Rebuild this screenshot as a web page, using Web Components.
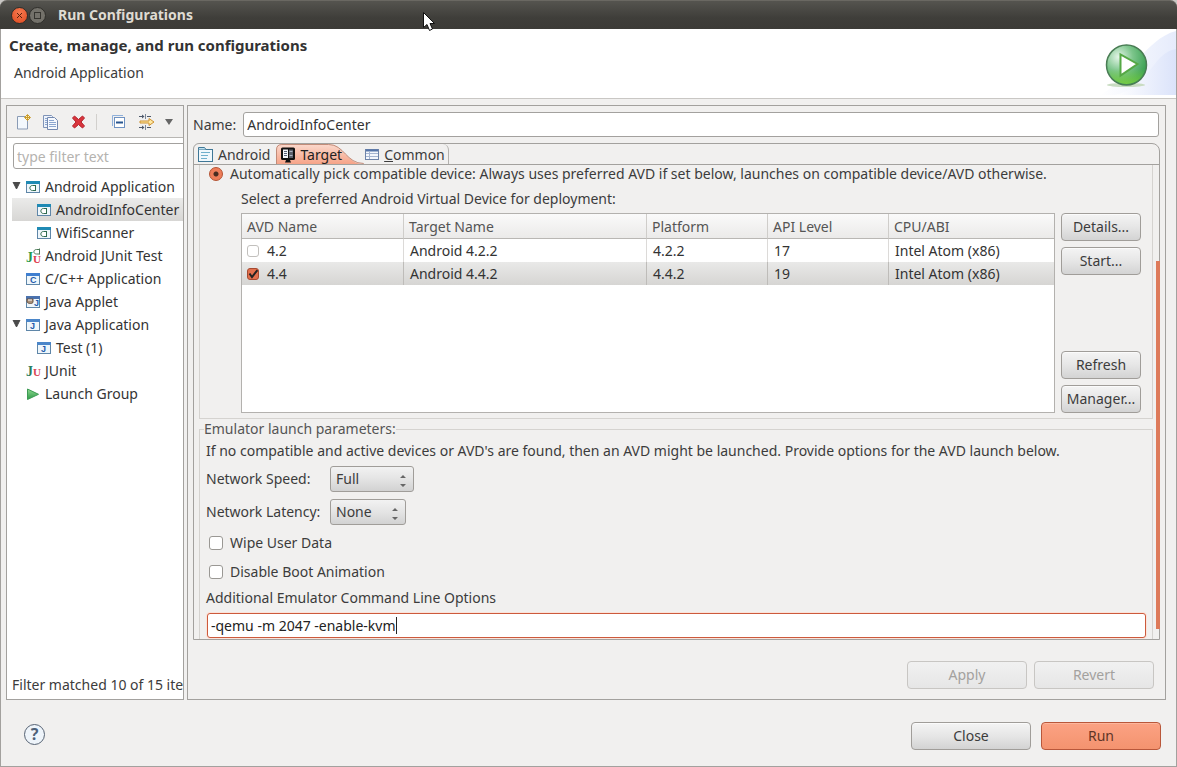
<!DOCTYPE html>
<html lang="en">
<head>
<meta charset="utf-8">
<title>Run Configurations</title>
<style>
  html, body { height: 100%; }
  body {
    margin: 0; overflow: hidden; background: #c9c7c4;
    font: 14px/20px "Noto Sans", "Open Sans", sans-serif; color: #3c3c3c;
  }
</style>
</head>
<body>
<app-window></app-window>
<script>
const define = (name, html, init) => {
  const tpl = document.createElement('template');
  tpl.innerHTML = '<style>*,*::before,*::after{box-sizing:border-box}:host{box-sizing:border-box}</style>' + html;
  customElements.define(name, class extends HTMLElement {
    constructor() {
      super();
      this.attachShadow({ mode: 'open' }).append(tpl.content.cloneNode(true));
    }
    connectedCallback() { if (init) init(this, this.shadowRoot); }
  });
};

/* ---------- icons, 16x16 unless the viewBox says otherwise ---------- */
const frame = (top, inner) => `<rect x="1.5" y="2.5" width="13" height="11" fill="#eef6fb" stroke="#5f86a8"/><rect x="1" y="2" width="14" height="3" fill="${top}"/>${inner}`;
const letter = (t, x, y, c, s = 9) => `<text x="${x}" y="${y}" font-family="Liberation Sans, sans-serif" font-weight="bold" font-size="${s}" fill="${c}">${t}</text>`;
const serif = (t, x, y, c, s) => `<text x="${x}" y="${y}" font-family="Liberation Serif, serif" font-weight="bold" font-size="${s}" fill="${c}">${t}</text>`;
const ICONS = {
  android: frame('#1f8ab4', '<path d="M10.500 6v6M10.500 6.500h-3c-3.500 0-3.500 5 0 5h3" fill="#fff" stroke="#2f6b4f"/>'),
  junitdroid: serif('J', 1, 14, '#2a9a4a', 14) + serif('U', 8, 15, '#dd3b4c', 11) + '<path d="M14.500 .5v6M14.500 1.500h-3c-3.500 0-3.500 4.500 0 4.500h3" fill="none" stroke="#4d7a58"/>',
  c: frame('#3f7fd0', letter('C', 5, 12, '#1f5cab')),
  applet: frame('#4a72ae', letter('J', 9, 12, '#1f5cab')) + '<path d="M2 5h6v3c0 2-5 2-6 0z" fill="#a98f77" stroke="#6a5546"/><path d="M4 5v2M6 5v2" stroke="#fff"/>',
  java: frame('#4b86c9', letter('J', 5, 12, '#1f5cab')),
  junit: serif('J', 1, 13, '#2b7c5c', 14) + serif('U', 8, 13, '#d84655', 11),
  group: '<defs><linearGradient id="lg" x2="0" y2="1"><stop stop-color="#8fd98f"/><stop offset="1" stop-color="#2d9a48"/></linearGradient></defs><path d="M2.5 3v10.5L13.5 8.3z" fill="url(#lg)" stroke="#3d9b54"/>',
  page: '<path d="M1.500 2.500h8l2 4v8.500h-10z" fill="#f3f8fd" stroke="#8a9bb5"/><path d="M11.500 .5l3 3-3 3-3-3z" fill="#fff1b0" stroke="#c99a2b"/><path d="M11.500 1v5M9 3.500h5" stroke="#c99a2b"/>',
  copy: '<path d="M.5 1.500h8l1 1v11h-9z" fill="#eef3fb" stroke="#8094b8"/><path d="M4.500 3.500h7l3 3v9h-10z" fill="#f6f9fe" stroke="#7489b0"/><path d="M6 6.500h5M6 8.500h7M6 10.500h7M6 12.500h7M2 4.500h2M2 6.500h2M2 8.500h2M2 10.500h2" stroke="#8ba6d0"/>',
  del: '<path d="M1.500 4l2-2L7.500 5.500 11.500 2l2 2L10 8l3.500 4-2 2-4-3.500L3.500 14l-2-2L5 8z" fill="#d9343c" stroke="#b3222c"/>',
  collapse: '<path d="M1.500 12V1.500H12" fill="none" stroke="#8fb0da"/><rect x="3.500" y="3.500" width="10" height="10" fill="#fff" stroke="#6f92c2"/><path d="M5 8.500h7" stroke="#28558f" stroke-width="2"/>',
  filter: '<path d="M0 2.500h5M0 13.500h5M8 2.500h4M8 13.500h4" stroke="#4e596b"/><path d="M3 .5l2.500 2L3 4.500zM3 11.500l2.500 2-2.500 2z" fill="#4e596b"/><path d="M6.500 0v5M6.500 11v5" stroke="#7b8798"/><path d="M1 7h9V4.500l5 3.500-5 3.500V9H1z" fill="#ffe9a3" stroke="#cf9231"/>',
  tabAndroid: '<rect x=".5" y="2.500" width="14" height="12" fill="#f0f8fc" stroke="#3f7796"/><path d="M.5 2.500V.5h6l1.500 2H14.500" fill="#bfe0ee" stroke="#3f7796"/><path d="M3 5.500h9M3 8.500h7M3 11.500h6" stroke="#6fb0cc"/>',
  tabTarget: '<rect x="1" y=".5" width="14" height="12.500" rx="1.500" fill="#111"/><rect x="3" y="2.500" width="5" height="8.500" fill="#f3f6fb"/><path d="M4 4.500h3M4 6.500h3M4 8.500h3" stroke="#59657a"/><rect x="9" y="2.500" width="4" height="8.500" fill="#5b616c"/><path d="M9.500 4.500h3M9.500 8.500h3" stroke="#aeb6c4"/><path d="M5 15.500l1-2.500h4l1 2.500z" fill="#111"/>',
  tabCommon: '<rect x="1.500" y="2.500" width="13" height="10" fill="#f4f7fc" stroke="#6c82a8"/><path d="M2 3.500h12" stroke="#5574a8" stroke-width="2"/><path d="M2 6.500h12M2 9.500h12M5.500 4v8" stroke="#a5b5d0"/>'
};
define('ui-icon', `<style>:host{display:block;flex:none;width:16px;height:16px}svg{display:block;width:100%;height:100%}</style><svg viewBox="0 0 16 16" aria-hidden="true"></svg>`,
  (el, r) => { r.querySelector('svg').innerHTML = ICONS[el.getAttribute('name')] || ''; });

/* ---------- controls ---------- */
define('ui-button', `
<style>
  :host { display: block; }
  button {
    display: block; width: 100%; height: 28px; padding: 0; font: inherit; color: #3c3c3c; white-space: nowrap;
    border: 1px solid #a09d99; border-radius: 4px; box-shadow: inset 0 1px #fbfbfb;
    background: linear-gradient(#f4f4f4, #e6e6e6 50%, #d3d3d3);
  }
  :host([primary]) button { border-color: #b9573a; color: #5e3526; background: linear-gradient(#fba283, #f4936f); box-shadow: inset 0 1px #fdb69c; }
  button:disabled { color: #a3a19e; border-color: #c8c6c3; background: linear-gradient(#f1f1f1, #e6e6e6); box-shadow: none; }
</style>
<button type="button"><slot></slot></button>`,
  (el, r) => { r.querySelector('button').disabled = el.hasAttribute('disabled'); });

define('ui-check', `
<style>
  :host { display: block; }
  label { display: flex; align-items: center; gap: 7px; line-height: 20px; white-space: nowrap; }
  :host([radio]) label { line-height: 17px; }
  input { appearance: none; flex: none; width: 14px; height: 14px; margin: 0; border: 1px solid #9a9894; border-radius: 3px; background: #fff; }
  :host([small]) input { width: 12px; height: 12px; border-color: #c2c0bd; }
  :host([small]) label { gap: 8px; }
  :host([small]) input:checked {
    border-color: #a64a31;
    background: url("data:image/svg+xml,%3Csvg xmlns='http://www.w3.org/2000/svg' viewBox='0 0 10 10'%3E%3Cpath d='M1.500 4.500l2.500 3.500 5.500-7' fill='none' stroke='%23222' stroke-width='2'/%3E%3C/svg%3E") #e2704d;
  }
  input[type=radio] { border-radius: 50%; }
  input[type=radio]:checked { border-color: #b4512f; background: radial-gradient(circle, #4a2c20 0 2px, #ee7d59 3px); }
</style>
<label><input type="checkbox"><span><slot></slot></span></label>`,
  (el, r) => {
    const i = r.querySelector('input');
    if (el.hasAttribute('radio')) i.type = 'radio';
    i.checked = el.hasAttribute('checked');
  });

define('ui-select', `
<style>
  :host { display: flex; align-items: center; gap: 6px; }
  label { width: 118px; white-space: nowrap; }
  .box { position: relative; display: block; }
  select {
    appearance: none; display: block; height: 26px; padding: 0 30px 0 5px; font: inherit; color: #3c3c3c;
    border: 1px solid #a09d99; border-radius: 3px; background: linear-gradient(#f2f2f2, #e4e4e4 50%, #d2d2d2);
  }
  :host([wide]) select { width: 84px; } :host(:not([wide])) select { width: 76px; }
  svg { position: absolute; right: 7px; top: 7px; width: 8px; height: 14px; pointer-events: none; }
</style>
<label for="s"></label>
<span class="box"><select id="s"><option></option></select>
<svg viewBox="0 0 8 14" fill="#666"><path d="M1 5l3-3 3 3zM1 11l3 3 3-3z"/></svg></span>`,
  (el, r) => {
    r.querySelector('label').textContent = el.getAttribute('label');
    r.querySelector('option').textContent = el.getAttribute('value');
  });

/* ---------- window chrome ---------- */
define('title-bar', `
<style>
  :host { display: flex; align-items: center; height: 29px; flex: none; padding: 0 11px; gap: 1px; position: relative;
    border-radius: 7px 7px 0 0; background: linear-gradient(#55544f, #3f3e3a 60%, #3c3b37); border-top: 1px solid #6a6862; }
  button { width: 17px; height: 17px; padding: 0; border: 1px solid #2f2e2a; border-radius: 50%; }
  .close { background: radial-gradient(circle at 50% 30%, #f6794f, #dd4a20); }
  .max { background: #73716a; }
  svg { display: block; width: 15px; height: 15px; }
  h1 { margin: 0 0 0 11px; font-size: 14px; line-height: 20px; font-weight: bold; color: #dfdbd2; }
  .pointer { position: absolute; left: 422px; top: 10px; width: 14px; height: 22px; }
</style>
<button class="close" type="button" aria-label="Close"><svg viewBox="0 0 15 15"><path d="M5 5l5 5M10 5l-5 5" stroke="#59200c"/></svg></button>
<button class="max" type="button" aria-label="Maximize"><svg viewBox="0 0 15 15"><rect x="4.500" y="4.500" width="6" height="6" fill="none" stroke="#35342f"/></svg></button>
<h1>Run Configurations</h1>
<svg class="pointer" viewBox="0 0 14 22"><path d="M1.500 1.500v15l3.500-3 2.500 6 3-1.500-2.500-5.500h4.500z" fill="#fff" stroke="#111"/></svg>`);

define('dialog-header', `
<style>
  :host { display: flex; justify-content: space-between; flex: none; height: 70px; background: #fff; border-bottom: 1px solid #c9c7c4; overflow: hidden; }
  .text { padding: 6px 0 0 8px; }
  h2 { margin: 0; font-size: 15px; line-height: 20px; font-weight: bold; color: #333; }
  p { margin: 8px 0 0 5px; }
  svg { display: block; width: 136px; height: 66px; }
</style>
<div class="text"><h2>Create, manage, and run configurations</h2><p>Android Application</p></div>
<svg viewBox="0 0 136 66" aria-hidden="true">
  <defs>
    <radialGradient id="g" cx=".3" cy=".3" r=".8"><stop stop-color="#e4f5e8"/><stop offset=".45" stop-color="#7cc58b"/><stop offset="1" stop-color="#2f9a4a"/></radialGradient>
    <linearGradient id="b" x2="1" y2="0"><stop stop-color="#fff"/><stop offset="1" stop-color="#dbe3fa"/></linearGradient>
    <linearGradient id="y" x2="0" y2="1"><stop offset=".6" stop-color="#8bdc3a" stop-opacity="0"/><stop offset="1" stop-color="#8bdc3a" stop-opacity=".7"/></linearGradient>
  </defs>
  <path d="M60 66C90 50 105 10 136 2V66z" fill="url(#b)" opacity=".7"/>
  <path d="M75 66C110 58 112 24 136 20V66z" fill="url(#b)"/>
  <ellipse cx="86" cy="56" rx="19" ry="2" fill="#c9dcc2"/>
  <circle cx="86.500" cy="36" r="20" fill="url(#g)" stroke="#4a7d55" stroke-width="1.500"/>
  <circle cx="86.500" cy="36" r="19" fill="url(#y)"/>
  <path d="M80.500 25.500v21L97.500 35z" fill="#fff" stroke="#55a845" stroke-width="2"/>
</svg>`);

/* ---------- left panel ---------- */
define('tree-item', `
<style>
  :host { display: flex; align-items: center; height: 23px; white-space: nowrap; padding-left: 13px; color: #333; }
  :host([child]) { padding-left: 24px; }
  :host([open]) { padding-left: 0; }
  :host([selected]) { background: linear-gradient(#ebebea, #d7d6d4); }
  .arrow { display: none; width: 13px; flex: none; }
  :host([open]) .arrow { display: block; }
  .arrow svg { display: block; width: 9px; height: 10px; }
  ui-icon { margin-right: 4px; }
</style>
<span class="arrow"><svg viewBox="0 0 9 10"><path d="M1 0h7L4.500 7z" fill="#4a4a4a" stroke="#4a4a4a"/></svg></span>
<ui-icon></ui-icon><span><slot></slot></span>`,
  (el, r) => {
    el.setAttribute('role', 'treeitem');
    const i = r.querySelector('ui-icon'), n = document.createElement('ui-icon');
    n.setAttribute('name', el.getAttribute('icon')); i.replaceWith(n);
  });

define('side-panel', `
<style>
  :host { display: flex; flex-direction: column; background: #fff; border: 1px solid #a3a19e; overflow: hidden; }
  .tools { display: flex; align-items: center; height: 32px; flex: none; padding: 0 8px 0 9px; background: #f1f0ef; border-bottom: 1px solid #b8b6b3; }
  .tools button { width: 28px; height: 24px; flex: none; padding: 0; border: 0; background: none; display: flex; align-items: center; justify-content: flex-start; }
  .tools .wide { width: 27px; }
  .tools .short { width: 25px; }
  .sep { width: 1px; height: 16px; background: #d2d0cd; margin-right: 14px; flex: none; }
  .tools .menu { width: 10px; margin-left: -2px; }
  .menu svg { width: 8px; height: 6px; }
  .body { flex: 1; display: flex; flex-direction: column; padding: 5px 0 4px 5px; }
  input { width: 220px; height: 26px; flex: none; margin-left: 1px; padding: 0 3px; font: inherit; border: 1px solid #a3a19e; border-radius: 3px; background: #fff; }
  input::placeholder { color: #b5b3b0; opacity: 1; }
  .tree { margin-top: 6px; flex: 1; }
  .count { white-space: nowrap; }
</style>
<div class="tools">
  <button type="button" class="wide" aria-label="New"><ui-icon name="page"></ui-icon></button>
  <button type="button" aria-label="Duplicate"><ui-icon name="copy"></ui-icon></button>
  <button type="button" class="short" aria-label="Delete"><ui-icon name="del"></ui-icon></button>
  <span class="sep"></span>
  <button type="button" aria-label="Collapse all"><ui-icon name="collapse"></ui-icon></button>
  <button type="button" aria-label="Filter"><ui-icon name="filter"></ui-icon></button>
  <button type="button" class="menu" aria-label="Menu"><svg viewBox="0 0 8 6"><path d="M0 0h8L4 6z" fill="#666"/></svg></button>
</div>
<div class="body">
  <input type="text" placeholder="type filter text" aria-label="Filter">
  <div class="tree" role="tree">
    <tree-item open icon="android">Android Application</tree-item>
    <tree-item child selected icon="android">AndroidInfoCenter</tree-item>
    <tree-item child icon="android">WifiScanner</tree-item>
    <tree-item icon="junitdroid">Android JUnit Test</tree-item>
    <tree-item icon="c">C/C++ Application</tree-item>
    <tree-item icon="applet">Java Applet</tree-item>
    <tree-item open icon="java">Java Application</tree-item>
    <tree-item child icon="java">Test (1)</tree-item>
    <tree-item icon="junit">JUnit</tree-item>
    <tree-item icon="group">Launch Group</tree-item>
  </div>
  <div class="count">Filter matched 10 of 15 items</div>
</div>`);

/* ---------- right panel ---------- */
define('tab-strip', `
<style>
  :host { display: flex; height: 21px; flex: none; border-bottom: 1px solid #a3a19e; }
  button { display: flex; align-items: center; gap: 4px; height: 20px; padding: 1px 6px 0 4px; border: 0; background: none; font: inherit; color: #3c3c3c; white-space: nowrap; }
  .active { position: relative; z-index: 0; padding: 1px 22px 0 4px; color: #222; }
  .active svg { position: absolute; left: 0; top: 0; width: 100%; height: 20px; z-index: -1; }
  .last { border-right: 1px solid #b3b1ae; border-radius: 0 6px 0 0; padding: 1px 3px 0 0; }
</style>
<button type="button" role="tab"><ui-icon name="tabAndroid"></ui-icon>Android</button>
<button type="button" role="tab" class="active" aria-selected="true">
  <svg viewBox="0 0 90 20" preserveAspectRatio="none" aria-hidden="true"><defs><linearGradient id="t" x2="0" y2="1"><stop stop-color="#fbd9cd"/><stop offset="1" stop-color="#f6a488"/></linearGradient></defs><path d="M0 20V6Q0 0 6 0H54C70 0 72 20 90 20z" fill="url(#t)"/><path d="M.5 20V6Q.5 .5 6 .5H54C70 .5 72 19.500 90 19.500" fill="none" stroke="#c08a78"/></svg>
  <ui-icon name="tabTarget"></ui-icon>Target</button>
<button type="button" role="tab" class="last"><ui-icon name="tabCommon"></ui-icon><span><u>C</u>ommon</span></button>`);

define('avd-table', `
<style>
  :host { display: block; background: #fff; border: 1px solid #b3b1ae; height: 200px; }
  table { width: 100%; border-collapse: separate; border-spacing: 0; table-layout: fixed; color: #333; }
  th { height: 25px; padding: 1px 5px 0; text-align: left; font-weight: normal; color: #555; border-bottom: 1px solid #b9b7b4; border-right: 1px solid #cfcdca; background: linear-gradient(#fafafa, #ebeae9); }
  td { height: 23px; padding: 0 6px; border-right: 1px solid #dcdad8; white-space: nowrap; }
  td:first-child { padding-left: 5px; }
  th:last-child, td:last-child { border-right: 0; }
  .sel td { background: linear-gradient(#e9e9e8, #d6d5d3); border-right-color: #bebcb9; }
  .c1 { width: 162px; } .c2 { width: 243px; } .c3 { width: 121px; }
</style>
<table>
  <colgroup><col class="c1"><col class="c2"><col class="c3"><col class="c3"><col></colgroup>
  <thead><tr><th>AVD Name</th><th>Target Name</th><th>Platform</th><th>API Level</th><th>CPU/ABI</th></tr></thead>
  <tbody>
    <tr><td><ui-check small>4.2</ui-check></td><td>Android 4.2.2</td><td>4.2.2</td><td>17</td><td>Intel Atom (x86)</td></tr>
    <tr class="sel"><td><ui-check small checked>4.4</ui-check></td><td>Android 4.4.2</td><td>4.4.2</td><td>19</td><td>Intel Atom (x86)</td></tr>
  </tbody>
</table>`);

define('target-page', `
<style>
  :host { display: flex; flex: 1; min-height: 0; padding-left: 5px; }
  .content { flex: 1; min-width: 0; overflow: hidden; }
  .group { border: 1px solid #d5d3d0; border-top: 0; padding: 0 11px 5px 9px; }
  .pick { margin: 7px 0 0 32px; }
  .pick .row { display: flex; gap: 6px; margin-top: 4px; }
  avd-table { flex: 1; }
  .side { width: 80px; flex: none; display: flex; flex-direction: column; gap: 6px; }
  .gap { flex: 1; }
  fieldset { margin: 0; min-width: 0; border: 1px solid #d5d3d0; border-bottom: 0; padding: 2px 6px 0 7px; }
  legend { height: 20px; margin-left: -3px; padding: 0; color: #555; }
  p { margin: 0 0 5px -1px; white-space: nowrap; }
  ui-select { margin: 0 0 7px -1px; }
  .checks { display: flex; flex-direction: column; gap: 9px; padding: 1px 0 6px 2px; }
  .options { display: block; margin: 0 0 5px -1px; }
  .cmd { position: relative; display: block; height: 26px; }
  .cmd input { display: block; width: 100%; height: 25px; padding: 0 3px; font: inherit; color: #222; border: 1px solid #cc5a3c; border-radius: 3px; background: #fff; box-shadow: 0 0 0 1px #fbe3da; outline: 0; }
  .caret { position: absolute; left: 189px; top: 4px; width: 1px; height: 17px; background: #222; }
  .bar { width: 4px; flex: none; margin: 96px -1px 10px 3px; background: #dd7a5a; }
</style>
<div class="content">
  <div class="group">
    <ui-check radio checked>Automatically pick compatible device: Always uses preferred AVD if set below, launches on compatible device/AVD otherwise.</ui-check>
    <div class="pick">
      <div>Select a preferred Android Virtual Device for deployment:</div>
      <div class="row"><avd-table></avd-table>
        <div class="side"><ui-button>Details...</ui-button><ui-button>Start...</ui-button><span class="gap"></span><ui-button>Refresh</ui-button><ui-button>Manager...</ui-button></div>
      </div>
    </div>
  </div>
  <fieldset>
    <legend>Emulator launch parameters:</legend>
    <p>If no compatible and active devices or AVD's are found, then an AVD might be launched. Provide options for the AVD launch below.</p>
    <ui-select wide label="Network Speed:" value="Full"></ui-select>
    <ui-select label="Network Latency:" value="None"></ui-select>
    <div class="checks"><ui-check>Wipe User Data</ui-check><ui-check>Disable Boot Animation</ui-check></div>
    <label class="options" for="cmd">Additional Emulator Command Line Options</label>
    <span class="cmd"><input id="cmd" type="text" value="-qemu -m 2047 -enable-kvm"><span class="caret"></span></span>
  </fieldset>
</div>
<div class="bar"></div>`);

define('config-panel', `
<style>
  :host { display: flex; flex-direction: column; min-width: 0; border: 1px solid #a3a19e; padding: 6px 5px 10px; }
  .name { display: flex; align-items: center; height: 25px; gap: 7px; flex: none; padding-right: 1px; }
  .name input { flex: 1; min-width: 0; height: 25px; padding: 0 3px; font: inherit; color: #333; border: 1px solid #a3a19e; border-radius: 3px; background: #fff; }
  .folder { margin-top: 6px; display: flex; flex-direction: column; border: 1px solid #a3a19e; border-radius: 6px 8px 0 0; flex: 1; min-height: 0; }
  .actions { display: flex; justify-content: flex-end; gap: 7px; padding: 21px 6px 0 0; flex: none; }
  .actions ui-button { width: 120px; }
</style>
<div class="name"><label for="n">Name:</label><input id="n" type="text" value="AndroidInfoCenter"></div>
<div class="folder"><tab-strip role="tablist"></tab-strip><target-page></target-page></div>
<div class="actions"><ui-button disabled>Apply</ui-button><ui-button disabled>Revert</ui-button></div>`);

define('dialog-footer', `
<style>
  :host { display: flex; align-items: center; justify-content: flex-end; gap: 10px; flex: none; height: 66px; padding: 6px 15px 0 23px; }
  .help { width: 21px; height: 21px; margin: 0 auto 4px 0; padding: 0; border: 1px solid #566273; border-radius: 50%; background: #eef4fa; color: #4d6078; font: bold 16px/19px "Noto Sans", sans-serif; }
  ui-button { width: 120px; }
</style>
<button class="help" type="button" aria-label="Help">?</button>
<ui-button>Close</ui-button><ui-button primary>Run</ui-button>`);

define('app-window', `
<style>
  :host { display: flex; flex-direction: column; height: 100vh; }
  .frame { flex: 1; min-height: 0; display: flex; flex-direction: column; border: 1px solid #a3a19e; border-top: 0; background: #f1f0ef; }
  .main { flex: 1; min-height: 0; display: grid; grid-template-columns: 178px minmax(0, 1fr); gap: 3px; padding: 6px 10px 0 5px; }
</style>
<title-bar></title-bar>
<div class="frame">
  <dialog-header></dialog-header>
  <div class="main"><side-panel></side-panel><config-panel></config-panel></div>
  <dialog-footer></dialog-footer>
</div>`);
</script>
</body>
</html>
